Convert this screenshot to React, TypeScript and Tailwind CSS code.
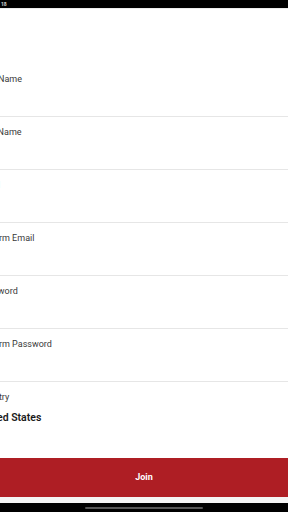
import React from 'react';

const fields = ['First Name', 'Last Name', 'Email', 'Confirm Email', 'Password', 'Confirm Password'];

export default function App() {
  return (
    <div className="w-[288px] h-[512px] bg-white flex flex-col overflow-hidden font-['Roboto',sans-serif]">
      {/* status bar */}
      <div className="h-[8px] bg-black shrink-0 flex items-center px-[1px]">
        <span className="text-[5px] leading-none text-white/80 font-bold">18</span>
      </div>
      <div className="h-[1px] bg-[#ececec] shrink-0" />
      <div className="h-[55px] shrink-0" />

      {/* form */}
      <div className="flex flex-col -ml-[22px] shrink-0">
        {fields.map((label) => (
          <div key={label} className="h-[53px] border-b border-[#e6e6e6] pt-[10px] shrink-0">
            <p className="text-[9px] leading-[11px] text-[#3a3a3a]">{label}</p>
          </div>
        ))}
        <div className="h-[76px] pt-[10px] shrink-0">
          <p className="text-[9px] leading-[11px] text-[#3a3a3a]">Country</p>
          <p className="mt-[9px] text-[10.5px] leading-[12px] font-semibold text-[#1a1a1a]">United States</p>
        </div>
      </div>

      <button className="h-[39px] shrink-0 bg-[#ae1e24] text-white text-[9px] font-bold">Join</button>
      <div className="h-[6px] bg-[#f4f4f4] shrink-0" />
      <div className="flex-1 bg-black flex items-center justify-center">
        <div className="w-[118px] h-[2px] rounded-full bg-[#555]" />
      </div>
    </div>
  );
}
